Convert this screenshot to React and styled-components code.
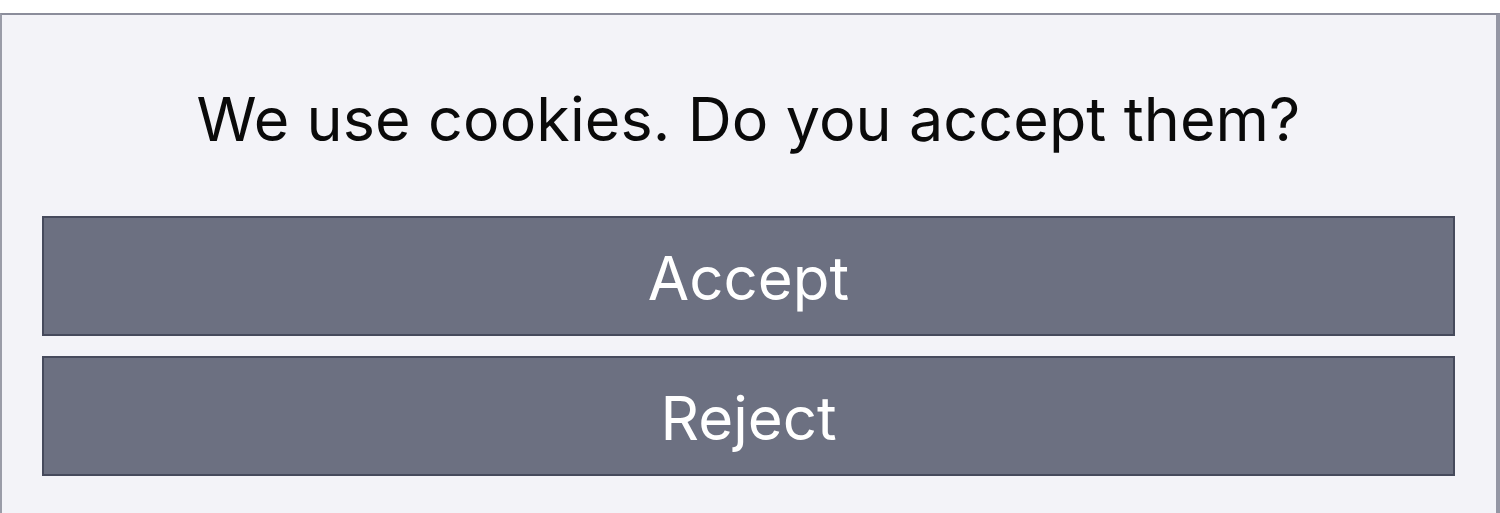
import React from "react";
import styled, { createGlobalStyle } from "styled-components";

const GlobalStyle = createGlobalStyle`
  html, body {
    margin: 0;
    padding: 0;
    background: #ffffff;
    overflow: hidden;
  }
`;

const Page = styled.div`
  padding-top: 13px;
  height: 513px;
  box-sizing: border-box;
  display: flex;
  flex-direction: column;
`;

const Panel = styled.div`
  flex: 1;
  box-sizing: border-box;
  background: #f3f3f8;
  border-top: 2px solid #8b8d9b;
  border-left: 2px solid #9a9ca8;
  border-right: 4px solid #9496a4;
  padding: 0 41px 0 40px;
  display: flex;
  flex-direction: column;
  font-family: Inter, "Liberation Sans", sans-serif;
`;

const Title = styled.h1`
  margin: 0;
  height: 201px;
  display: flex;
  align-items: center;
  justify-content: center;
  font-size: 61px;
  font-weight: 400;
  color: #0a0a0a;
  letter-spacing: 0.1px;
  padding-top: 6px;
  box-sizing: border-box;
`;

const Actions = styled.div`
  display: flex;
  flex-direction: column;
  gap: 20px;
`;

const Button = styled.button`
  height: 120px;
  width: 100%;
  box-sizing: border-box;
  background: #6c7081;
  border: 2px solid #464a5c;
  color: #ffffff;
  font-family: Inter, "Liberation Sans", sans-serif;
  font-size: 60px;
  font-weight: 400;
  padding: 4px 0 0;
  cursor: pointer;
`;

const App = () => (
  <Page>
    <GlobalStyle />
    <Panel>
      <Title>We use cookies. Do you accept them?</Title>
      <Actions>
        <Button>Accept</Button>
        <Button>Reject</Button>
      </Actions>
    </Panel>
  </Page>
);

export default App;
